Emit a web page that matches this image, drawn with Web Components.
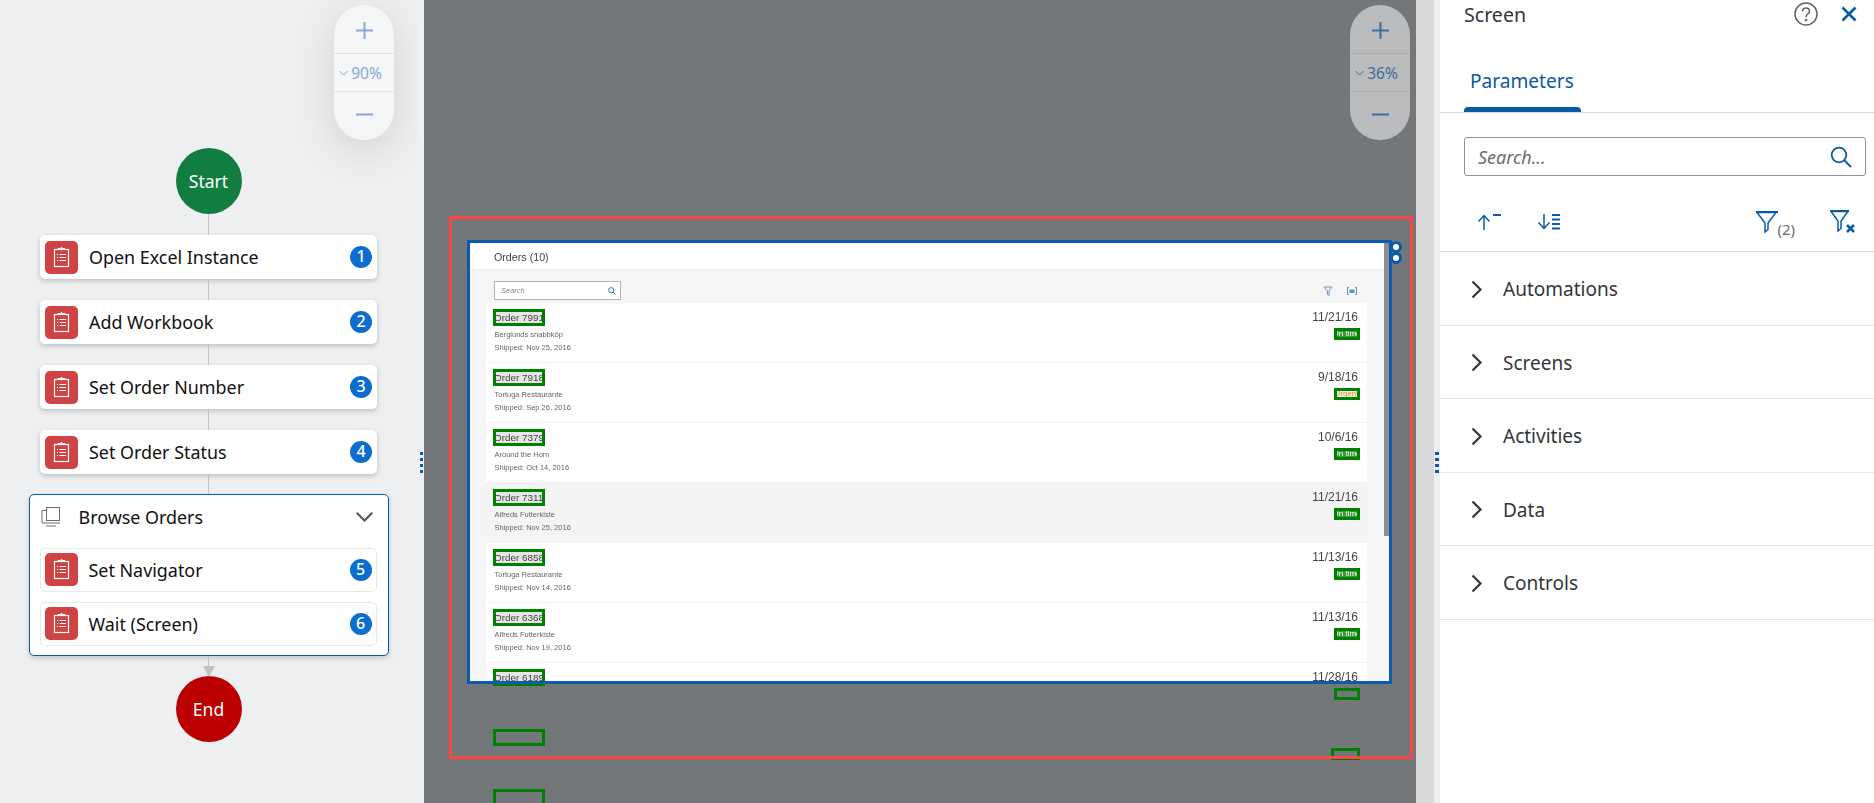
<!DOCTYPE html>
<html>
<head>
<meta charset="utf-8">
<title>Screen</title>
<style>
    html, body { margin: 0; height: 100%; overflow: hidden; }
    body { font-family: "Noto Sans", "Liberation Sans", sans-serif; color: #32363a; }
</style>
</head>
<body>
<studio-app>
    <flow-pane slot="left">
        <flow-terminal color="#127d40">Start</flow-terminal>
        <flow-line></flow-line>
        <flow-node num="1">Open Excel Instance</flow-node>
        <flow-line></flow-line>
        <flow-node num="2">Add Workbook</flow-node>
        <flow-line></flow-line>
        <flow-node num="3">Set Order Number</flow-node>
        <flow-line></flow-line>
        <flow-node num="4">Set Order Status</flow-node>
        <flow-line short></flow-line>
        <flow-group>
            <span slot="title">Browse Orders</span>
            <flow-node num="5" inner>Set Navigator</flow-node>
            <flow-node num="6" inner>Wait (Screen)</flow-node>
        </flow-group>
        <flow-line short arrow></flow-line>
        <flow-terminal color="#bb0000">End</flow-terminal>
    </flow-pane>

    <screen-canvas slot="middle">
        <mock-screen>
            <order-row>
                <span slot="title">Order 7991</span><span slot="customer">Berglunds snabbköp</span><span slot="shipped">Shipped: Nov 25, 2016</span><span slot="date">11/21/16</span><span slot="status">On time</span>
            </order-row>
            <order-row urgent>
                <span slot="title">Order 7918</span><span slot="customer">Tortuga Restaurante</span><span slot="shipped">Shipped: Sep 26, 2016</span><span slot="date">9/18/16</span><span slot="status">Urgent</span>
            </order-row>
            <order-row>
                <span slot="title">Order 7379</span><span slot="customer">Around the Horn</span><span slot="shipped">Shipped: Oct 14, 2016</span><span slot="date">10/6/16</span><span slot="status">On time</span>
            </order-row>
            <order-row selected>
                <span slot="title">Order 7311</span><span slot="customer">Alfreds Futterkiste</span><span slot="shipped">Shipped: Nov 25, 2016</span><span slot="date">11/21/16</span><span slot="status">On time</span>
            </order-row>
            <order-row>
                <span slot="title">Order 6858</span><span slot="customer">Tortuga Restaurante</span><span slot="shipped">Shipped: Nov 14, 2016</span><span slot="date">11/13/16</span><span slot="status">On time</span>
            </order-row>
            <order-row>
                <span slot="title">Order 6368</span><span slot="customer">Alfreds Futterkiste</span><span slot="shipped">Shipped: Nov 19, 2016</span><span slot="date">11/13/16</span><span slot="status">On time</span>
            </order-row>
            <order-row cut>
                <span slot="title">Order 6189</span><span slot="date">11/28/16</span>
            </order-row>
            <order-row ghost></order-row>
            <order-row ghost></order-row>
        </mock-screen>
    </screen-canvas>

    <side-panel slot="right">
        <accordion-item>Automations</accordion-item>
        <accordion-item>Screens</accordion-item>
        <accordion-item>Activities</accordion-item>
        <accordion-item>Data</accordion-item>
        <accordion-item>Controls</accordion-item>
    </side-panel>
</studio-app>

<script>
/* || Zoom pill */
const ZoomControlTemplate = document.createElement("template");
ZoomControlTemplate.innerHTML = `
    <style>
        :host {
            position: absolute;
            top: 5px;
            right: var(--zoom-right, 24px);
            display: flex;
            flex-direction: column;
            width: 60px;
            height: 135px;
            border-radius: 30px;
            background: #f4f6f7;
            color: #85a9d4;
            box-shadow: 0 10px 40px rgba(0,0,0,.12);
            font-size: 15.5px;
            z-index: 3;
        }
        :host([dim]) {
            background: #b9bbbd;
            color: #3d6c9f;
            box-shadow: none;
        }
        .btn { display: flex; align-items: center; justify-content: center; }
        .top { height: 48px; padding-top: 2px; box-sizing: border-box; }
        .mid {
            height: 39px;
            box-sizing: border-box;
            border-top: 1px solid rgba(0,0,0,.08);
            border-bottom: 1px solid rgba(0,0,0,.08);
            gap: 3px;
            padding-right: 7px;
        }
        .bot { flex: 1; padding-bottom: 4px; }
        svg { display: block; stroke: currentColor; fill: none; }
    </style>
    <div class="btn top"><svg width="17" height="17"><path d="M8.5 0v17M0 8.5h17" stroke-width="2"/></svg></div>
    <div class="btn mid"><svg width="9" height="6"><path d="M.5 1l4 4 4-4" stroke-width="1"/></svg><slot></slot></div>
    <div class="btn bot"><svg width="17" height="3"><path d="M0 1.5h17" stroke-width="2"/></svg></div>
`;
class ZoomControl extends HTMLElement {
    constructor() {
        super();
        this.attachShadow({ mode: "open" });
        this.shadowRoot.appendChild(ZoomControlTemplate.content.cloneNode(true));
    }
}
customElements.define("zoom-control", ZoomControl);

/* || Dotted splitter handle */
const SplitterDotsTemplate = document.createElement("template");
SplitterDotsTemplate.innerHTML = `
    <style>
        :host {
            display: flex;
            flex: none;
            width: 6px;
            align-items: center;
            justify-content: center;
            background: var(--splitter-bg, #eef0f2);
            padding-top: 122px;
            box-sizing: border-box;
        }
        div {
            width: var(--dot-w, 3px);
            height: 21px;
            background: repeating-linear-gradient(#0a5aad 0 3px, transparent 3px 6px);
        }
    </style>
    <div></div>
`;
class SplitterDots extends HTMLElement {
    constructor() {
        super();
        this.attachShadow({ mode: "open" });
        this.shadowRoot.appendChild(SplitterDotsTemplate.content.cloneNode(true));
    }
}
customElements.define("splitter-dots", SplitterDots);

/* || Flow diagram */
const FlowPaneTemplate = document.createElement("template");
FlowPaneTemplate.innerHTML = `
    <style>
        :host {
            position: relative;
            display: flex;
            flex-direction: column;
            align-items: center;
            box-sizing: border-box;
            width: 418px;
            padding: 148px 1px 0 0;
            background: #eeeff1;
            overflow: hidden;
        }
    </style>
    <zoom-control>90%</zoom-control>
    <slot></slot>
`;
class FlowPane extends HTMLElement {
    constructor() {
        super();
        this.attachShadow({ mode: "open" });
        this.shadowRoot.appendChild(FlowPaneTemplate.content.cloneNode(true));
    }
}
customElements.define("flow-pane", FlowPane);

const FlowTerminalTemplate = document.createElement("template");
FlowTerminalTemplate.innerHTML = `
    <style>
        :host {
            display: flex;
            flex: none;
            align-items: center;
            justify-content: center;
            width: 66px;
            height: 66px;
            border-radius: 50%;
            color: #fff;
            font-size: 17.5px;
        }
    </style>
    <slot></slot>
`;
class FlowTerminal extends HTMLElement {
    constructor() {
        super();
        this.attachShadow({ mode: "open" });
        this.shadowRoot.appendChild(FlowTerminalTemplate.content.cloneNode(true));
    }
    connectedCallback() {
        this.style.background = this.getAttribute("color");
    }
}
customElements.define("flow-terminal", FlowTerminal);

const FlowLineTemplate = document.createElement("template");
FlowLineTemplate.innerHTML = `
    <style>
        :host {
            display: block;
            flex: none;
            position: relative;
            width: 1.5px;
            height: 21px;
            background: #c2c2c2;
        }
        :host([short]) { height: 20px; }
        :host([arrow]) { z-index: 1; }
        svg { display: none; position: absolute; left: -5px; bottom: -1px; }
        :host([arrow]) svg { display: block; }
    </style>
    <svg width="12" height="11"><path d="M0 0h12L6 11z" fill="#c2c2c2"/></svg>
`;
class FlowLine extends HTMLElement {
    constructor() {
        super();
        this.attachShadow({ mode: "open" });
        this.shadowRoot.appendChild(FlowLineTemplate.content.cloneNode(true));
    }
}
customElements.define("flow-line", FlowLine);

const FlowNodeTemplate = document.createElement("template");
FlowNodeTemplate.innerHTML = `
    <style>
        :host {
            display: flex;
            flex: none;
            align-items: center;
            box-sizing: border-box;
            width: 337px;
            height: 44px;
            padding: 0 5px;
            background: #fff;
            border-radius: 5px;
            color: #111;
            font-size: 17.9px;
            box-shadow: 0 2px 5px rgba(0,0,0,.2);
        }
        :host([inner]) { box-shadow: inset 0 0 0 1px #e9e9e9; }
        .icon {
            flex: none;
            width: 33px;
            height: 33px;
            border-radius: 5px;
            background: #d04344;
            margin-right: 11px;
        }
        .icon svg { display: block; }
        .label { flex: 1; white-space: nowrap; }
        .num {
            flex: none;
            width: 22px;
            height: 22px;
            line-height: 21px;
            border-radius: 50%;
            background: #0b6dcf;
            color: #fff;
            font-size: 16px;
            font-weight: 500;
            text-align: center;
        }
    </style>
    <div class="icon">
        <svg width="33" height="33" fill="none" stroke="#fff">
            <rect x="9.5" y="8.5" width="14" height="17" stroke-width="1.2"/>
            <path d="M13 8.5v-1h2.5l1-1.3 1 1.3H20v1z" fill="#fff" stroke-width="1"/>
            <path d="M12 13.5h1M14.5 13.5H21M12 16.5h1M14.5 16.5H21M12 19.5h1M14.5 19.5H21" stroke-width="1"/>
        </svg>
    </div>
    <div class="label"><slot></slot></div>
    <div class="num"></div>
`;
class FlowNode extends HTMLElement {
    constructor() {
        super();
        this.attachShadow({ mode: "open" });
        this.shadowRoot.appendChild(FlowNodeTemplate.content.cloneNode(true));
    }
    connectedCallback() {
        this.shadowRoot.querySelector(".num").textContent = this.getAttribute("num");
    }
}
customElements.define("flow-node", FlowNode);

const FlowGroupTemplate = document.createElement("template");
FlowGroupTemplate.innerHTML = `
    <style>
        :host {
            display: flex;
            flex: none;
            flex-direction: column;
            gap: 10px;
            box-sizing: border-box;
            width: 360px;
            padding: .5px 10px 9.5px;
            border: 1.5px solid #0a5aad;
            border-radius: 5px;
            background: #fff;
            box-shadow: 0 2px 5px rgba(0,0,0,.18);
        }
        #head {
            display: flex;
            align-items: center;
            height: 42px;
            color: #111;
            font-size: 17.9px;
        }
        #head .set { margin: 0 18px 0 1px; flex: none; display: block; }
        #head .grow { flex: 1; white-space: nowrap; }
        #head .chev { margin-right: 5px; flex: none; display: block; }
        #body { display: flex; flex-direction: column; gap: 10px; }
    </style>
    <div id="head">
        <svg class="set" width="20" height="20" fill="none" stroke="#6b6f73" stroke-width="1">
            <rect x="5.5" y="0.5" width="13" height="13"/>
            <path d="M5.5 3.5H1v12.5h18M5 19h10"/>
        </svg>
        <div class="grow"><slot name="title"></slot></div>
        <svg class="chev" width="17" height="10" fill="none" stroke="#555" stroke-width="2"><path d="M.7.7l7.8 7.8L16.3.7"/></svg>
    </div>
    <div id="body"><slot></slot></div>
`;
class FlowGroup extends HTMLElement {
    constructor() {
        super();
        this.attachShadow({ mode: "open" });
        this.shadowRoot.appendChild(FlowGroupTemplate.content.cloneNode(true));
    }
}
customElements.define("flow-group", FlowGroup);

/* || Captured screen on the dark canvas */
const ScreenCanvasTemplate = document.createElement("template");
ScreenCanvasTemplate.innerHTML = `
    <style>
        :host {
            display: flex;
            flex: none;
            width: 1010px;
            background: #d9d9d9;
        }
        #dark {
            position: relative;
            flex: none;
            width: 992px;
            background: #74777a;
            overflow: hidden;
            --zoom-right: 6px;
        }
        #red {
            position: absolute;
            left: 25px;
            top: 216px;
            width: 964px;
            height: 543px;
            box-sizing: border-box;
            border: 3px solid #ff4444;
            pointer-events: none;
            z-index: 2;
        }
    </style>
    <div id="dark">
        <zoom-control dim>36%</zoom-control>
        <slot></slot>
        <div id="red"></div>
    </div>
`;
class ScreenCanvas extends HTMLElement {
    constructor() {
        super();
        this.attachShadow({ mode: "open" });
        this.shadowRoot.appendChild(ScreenCanvasTemplate.content.cloneNode(true));
    }
}
customElements.define("screen-canvas", ScreenCanvas);

const MockScreenTemplate = document.createElement("template");
MockScreenTemplate.innerHTML = `
    <style>
        :host {
            position: absolute;
            left: 43px;
            top: 240px;
            display: block;
            width: 925px;
            height: 444px;
            font-family: "Liberation Sans", Arial, sans-serif;
            color: #444;
        }
        #bg {
            position: absolute;
            inset: 3px;
            background: #f5f5f5;
        }
        #content {
            position: relative;
            display: flex;
            flex-direction: column;
            margin: 3px 0 0 3px;
            filter: blur(.35px);
        }
        #head {
            box-sizing: border-box;
            width: 914px;
            height: 27px;
            padding-left: 24px;
            background: #fff;
            border-bottom: 1px solid #ececec;
            font-size: 10.7px;
            line-height: 29px;
        }
        #tools {
            box-sizing: border-box;
            display: flex;
            align-items: center;
            width: 914px;
            height: 33px;
            padding: 8px 0 0 24px;
        }
        #search {
            display: flex;
            align-items: center;
            justify-content: space-between;
            box-sizing: border-box;
            width: 127px;
            height: 19px;
            padding: 0 4px 0 6px;
            background: #fff;
            border: 1.5px solid #b4b4b4;
            color: #888;
            font-size: 7.5px;
            font-style: italic;
        }
        #tool-icons {
            display: flex;
            align-items: center;
            gap: 14px;
            margin-left: auto;
            margin-right: 27px;
        }
        svg { display: block; }
        #list { display: flex; flex-direction: column; margin-left: 16px; width: 881px; }
        #scroll {
            position: absolute;
            left: 917px;
            top: 3px;
            width: 5px;
            height: 293px;
            background: #8e8e8e;
        }
        #frame {
            position: absolute;
            inset: 0;
            box-sizing: border-box;
            border: 3px solid #0a5aad;
            pointer-events: none;
        }
        .grip {
            position: absolute;
            left: 923px;
            width: 12px;
            height: 12px;
            border: 3px solid #0a5aad;
            border-radius: 50%;
            background: #fff;
            box-sizing: border-box;
        }
    </style>
    <div id="bg"></div>
    <div id="content">
        <div id="head">Orders (10)</div>
        <div id="tools">
            <div id="search">Search
                <svg width="8" height="8" fill="none" stroke="#3b78b8" stroke-width="1"><circle cx="3.2" cy="3.2" r="2.6"/><path d="M5 5l2.6 2.6"/></svg>
            </div>
            <div id="tool-icons">
                <svg width="10" height="10" fill="none" stroke="#5b93cf" stroke-width="1"><path d="M1 1h8L6 5v4.5L4.5 8V5z"/></svg>
                <svg width="10" height="8" fill="none" stroke="#5b93cf" stroke-width="1"><path d="M2 .5H.5v7H2M8 .5h1.500v7H8"/><rect x="3" y="3" width="4" height="2.500" fill="#5b93cf"/></svg>
            </div>
        </div>
        <div id="list"><slot></slot></div>
    </div>
    <div id="scroll"></div>
    <div id="frame"></div>
    <div class="grip" style="top:1px"></div>
    <div class="grip" style="top:12px"></div>
`;
class MockScreen extends HTMLElement {
    constructor() {
        super();
        this.attachShadow({ mode: "open" });
        this.shadowRoot.appendChild(MockScreenTemplate.content.cloneNode(true));
    }
}
customElements.define("mock-screen", MockScreen);

const OrderRowTemplate = document.createElement("template");
OrderRowTemplate.innerHTML = `
    <style>
        :host {
            display: flex;
            flex: none;
            justify-content: space-between;
            box-sizing: border-box;
            height: 60px;
            padding: 6px 7.5px 0 7px;
            background: #fff;
            box-shadow: inset 0 -1px 0 #f2f2f2;
        }
        :host([selected]) { background: #f4f4f4; }
        :host([cut]) { background: linear-gradient(#fff 18px, transparent 18px); box-shadow: none; }
        :host([ghost]) { background: none; box-shadow: none; }
        .hl {
            box-sizing: border-box;
            width: 52px;
            height: 17px;
            border: 3px solid #008000;
            background: #e6e6e6;
            overflow: hidden;
            white-space: nowrap;
            font-size: 9.9px;
            line-height: 12px;
        }
        :host([ghost]) .hl { background: none; }
        .hl div { margin-left: -2px; }
        .sub { margin: 0 0 0 1.5px; font-size: 7.5px; line-height: 13px; color: #666; white-space: nowrap; }
        .sub.first { margin-top: 1.5px; }
        .right { display: flex; flex-direction: column; align-items: flex-end; }
        .date { height: 18px; padding-right: 1.5px; font-size: 12px; line-height: 17px; white-space: nowrap; }
        :host([ghost]) .date { visibility: hidden; }
        .badge {
            display: flex;
            justify-content: center;
            box-sizing: border-box;
            width: 26px;
            height: 12px;
            margin-top: 1px;
            border: 3px solid #008000;
            background: #3a983a;
            color: #fff;
            font-size: 8px;
            line-height: 6px;
            overflow: hidden;
            white-space: nowrap;
        }
        :host([urgent]) .badge { background: #f4f4f0; color: #e78c07; }
        :host([cut]) .badge, :host([ghost]) .badge { background: none; }
        :host([ghost]) .badge { width: 29px; }
    </style>
    <div>
        <div class="hl"><div><slot name="title"></slot></div></div>
        <div class="sub first"><slot name="customer"></slot></div>
        <div class="sub"><slot name="shipped"></slot></div>
    </div>
    <div class="right">
        <div class="date"><slot name="date"></slot></div>
        <div class="badge"><slot name="status"></slot></div>
    </div>
`;
class OrderRow extends HTMLElement {
    constructor() {
        super();
        this.attachShadow({ mode: "open" });
        this.shadowRoot.appendChild(OrderRowTemplate.content.cloneNode(true));
    }
}
customElements.define("order-row", OrderRow);

/* || Right panel */
const AccordionItemTemplate = document.createElement("template");
AccordionItemTemplate.innerHTML = `
    <style>
        :host {
            display: flex;
            align-items: center;
            box-sizing: border-box;
            height: 73.5px;
            padding: 2px 0 0 31px;
            border-bottom: 1px solid #e5e5e5;
            font-size: 19px;
            color: #32363a;
        }
        svg { display: block; margin-right: 20px; }
    </style>
    <svg width="12" height="19" fill="none" stroke="#32363a" stroke-width="2.200"><path d="M1.500 1.500l8 8-8 8"/></svg>
    <slot></slot>
`;
class AccordionItem extends HTMLElement {
    constructor() {
        super();
        this.attachShadow({ mode: "open" });
        this.shadowRoot.appendChild(AccordionItemTemplate.content.cloneNode(true));
    }
}
customElements.define("accordion-item", AccordionItem);

const SidePanelTemplate = document.createElement("template");
SidePanelTemplate.innerHTML = `
    <style>
        :host {
            display: flex;
            flex-direction: column;
            flex: 1;
            min-width: 0;
            background: #fff;
            overflow: hidden;
        }
        svg { display: block; flex: none; }
        #title {
            display: flex;
            align-items: center;
            box-sizing: border-box;
            height: 28px;
            padding: 0 17px 0 24px;
            font-size: 19.6px;
        }
        #title .name { flex: 1; }
        #title .help { margin-right: 23px; }
        #tabs {
            display: flex;
            align-items: flex-end;
            box-sizing: border-box;
            height: 85px;
            padding-left: 24px;
            border-bottom: 1px solid #d9d9d9;
        }
        #tab {
            box-sizing: border-box;
            width: 117px;
            height: 79px;
            padding: 28px 0 0 6px;
            color: #0a5aa5;
            font-size: 19.1px;
            line-height: 40px;
            position: relative;
        }
        #tab::after {
            content: "";
            position: absolute;
            left: 0; right: 0; bottom: 0;
            height: 5px;
            background: #0a5aa5;
            border-radius: 4px 4px 0 0;
        }
        #search {
            display: flex;
            align-items: center;
            box-sizing: border-box;
            height: 39px;
            margin: 24px 8px 0 24px;
            padding: 0 13px 0 13px;
            border: 1px solid #89919a;
            border-radius: 3px;
            color: #6a6d70;
            font-size: 18px;
            font-style: italic;
        }
        #search span { flex: 1; }
        #tools {
            display: flex;
            align-items: center;
            box-sizing: border-box;
            height: 76px;
            padding: 16px 19px 0 37px;
            border-bottom: 1px solid #dcdcdc;
            color: #6a6d70;
            font-size: 15px;
        }
        #tools .gap { width: 36px; }
        #tools .spring { flex: 1; }
        #tools .count { margin: 14px 35px 0 -1px; }
    </style>
    <div id="title">
        <div class="name">Screen</div>
        <svg class="help" width="24" height="24" fill="none" stroke="#5f6368" stroke-width="1.500">
            <circle cx="12" cy="12" r="11"/>
            <path d="M8.500 9.500c0-2.200 1.500-3.500 3.500-3.500s3.500 1.300 3.500 3.200c0 2.800-3.500 2.800-3.500 5.800"/>
            <circle cx="12" cy="18" r=".6" fill="#5f6368"/>
        </svg>
        <svg width="16" height="16" fill="none" stroke="#0a5aa5" stroke-width="2.600"><path d="M1.500 1.500l13 13M14.500 1.500l-13 13"/></svg>
    </div>
    <div id="tabs"><div id="tab">Parameters</div></div>
    <div id="search">
        <span>Search...</span>
        <svg width="22" height="22" fill="none" stroke="#0a5aa5" stroke-width="1.800"><circle cx="9" cy="9" r="7.300"/><path d="M14 14l7 7"/></svg>
    </div>
    <div id="tools">
        <svg width="24" height="16" fill="none" stroke="#0a5aa5"><path d="M7 16V2M1.500 7.500L7 1.500l5.500 6" stroke-width="1.500"/><path d="M16 1h8" stroke-width="2"/></svg>
        <div class="gap"></div>
        <svg width="24" height="16" fill="none" stroke="#0a5aa5"><path d="M7 0v14M1.500 8.500L7 14.500l5.500-6" stroke-width="1.500"/><path d="M15 1h8M15 5.500h8M15 10h8M15 14.500h8" stroke-width="2"/></svg>
        <div class="spring"></div>
        <svg width="22" height="22" fill="none" stroke="#0a5aa5" stroke-width="1.500"><path d="M1.500 2l7.500 10v9l3-2.500V12l7.500-10" /><path d="M0 1h22" stroke-width="2.500"/></svg>
        <span class="count">(2)</span>
        <svg width="25" height="23" fill="none" stroke="#0a5aa5" stroke-width="1.500"><path d="M1.500 2l6.500 9v10l3-2.500V11l6.500-9"/><path d="M0 1h19" stroke-width="2.500"/><path d="M17 15l7 7M24 15l-7 7" stroke-width="2.500"/></svg>
    </div>
    <slot></slot>
`;
class SidePanel extends HTMLElement {
    constructor() {
        super();
        this.attachShadow({ mode: "open" });
        this.shadowRoot.appendChild(SidePanelTemplate.content.cloneNode(true));
    }
}
customElements.define("side-panel", SidePanel);

/* || App shell */
const StudioAppTemplate = document.createElement("template");
StudioAppTemplate.innerHTML = `
    <style>
        :host {
            display: flex;
            width: 100%;
            height: 803px;
            overflow: hidden;
        }
        ::slotted([slot=left]), ::slotted([slot=middle]) { height: 803px; }
        #split2 { --dot-w: 4px; --splitter-bg: #edeff1; }
    </style>
    <slot name="left"></slot>
    <splitter-dots id="split1"></splitter-dots>
    <slot name="middle"></slot>
    <splitter-dots id="split2"></splitter-dots>
    <slot name="right"></slot>
`;
class StudioApp extends HTMLElement {
    constructor() {
        super();
        this.attachShadow({ mode: "open" });
        this.shadowRoot.appendChild(StudioAppTemplate.content.cloneNode(true));
    }
}
customElements.define("studio-app", StudioApp);
</script>
</body>
</html>
